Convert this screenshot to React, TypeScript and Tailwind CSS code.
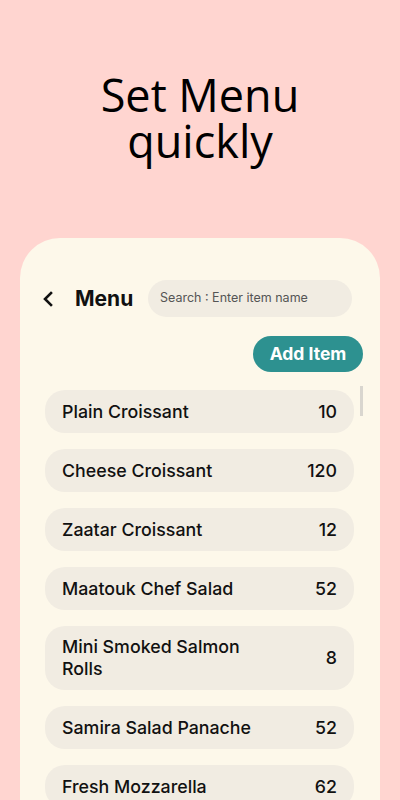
import React from 'react'

const items = [
  { name: 'Plain Croissant', qty: 10 },
  { name: 'Cheese Croissant', qty: 120 },
  { name: 'Zaatar Croissant', qty: 12 },
  { name: 'Maatouk Chef Salad', qty: 52 },
  { name: 'Mini Smoked Salmon Rolls', qty: 8 },
  { name: 'Samira Salad Panache', qty: 52 },
  { name: 'Fresh Mozzarella', qty: 62 },
]

const MenuRow = ({ name, qty }: { name: string; qty: number }) => {
  return (
    <div className="flex min-h-[43px] items-center justify-between rounded-[20px] bg-[#f1ece2] py-[10px] pl-[17px] pr-[17px]">
      <span className="max-w-[200px] text-[17.8px] font-medium leading-[22px] text-[#111]">
        {name}
      </span>
      <span className="text-[17.8px] font-medium leading-[22px] text-[#111]">
        {qty}
      </span>
    </div>
  )
}

const App = () => {
  return (
    <div className="flex h-[800px] flex-col overflow-hidden bg-[#ffd5d0] font-['Inter',sans-serif]">
      <h1 className="pt-[72px] text-center font-['Open_Sans',sans-serif] text-[45px] font-medium leading-[46px] text-black">
        <div>Set Menu</div>
        <div>quickly</div>
      </h1>
      <div className="mx-5 mt-[74px] flex-1 rounded-t-[40px] bg-[#fdf8ea] pt-[42px]">
        <div className="flex items-center pl-[22px] pr-[28px]">
          <svg
            width="12"
            height="16"
            viewBox="0 0 12 16"
            fill="none"
            stroke="#111"
            strokeWidth="2.6"
            strokeLinecap="square"
          >
            <path d="M9 2 3 8l6 6" />
          </svg>
          <span className="ml-[21px] text-[21px] font-bold text-[#111]">
            Menu
          </span>
          <div className="ml-auto flex h-[37px] w-[204px] items-center rounded-full bg-[#f1ece2] px-[12px] text-[12.5px] text-[#555]">
            Search : Enter item name
          </div>
        </div>
        <div className="mt-[19px] flex justify-end pr-[17px]">
          <button className="h-[36px] w-[110px] rounded-full bg-[#2d9190] text-[17.5px] font-bold text-white">
            Add Item
          </button>
        </div>
        <div className="mt-[18px] flex pl-[25px] pr-[17px]">
          <div className="flex flex-1 flex-col gap-[16px]">
            {items.map((item) => (
              <MenuRow key={item.name} name={item.name} qty={item.qty} />
            ))}
          </div>
          <div className="ml-[6px] mt-[-4px] h-[30px] w-[3px] bg-[#d9d6cf]" />
        </div>
      </div>
    </div>
  )
}

export default App
